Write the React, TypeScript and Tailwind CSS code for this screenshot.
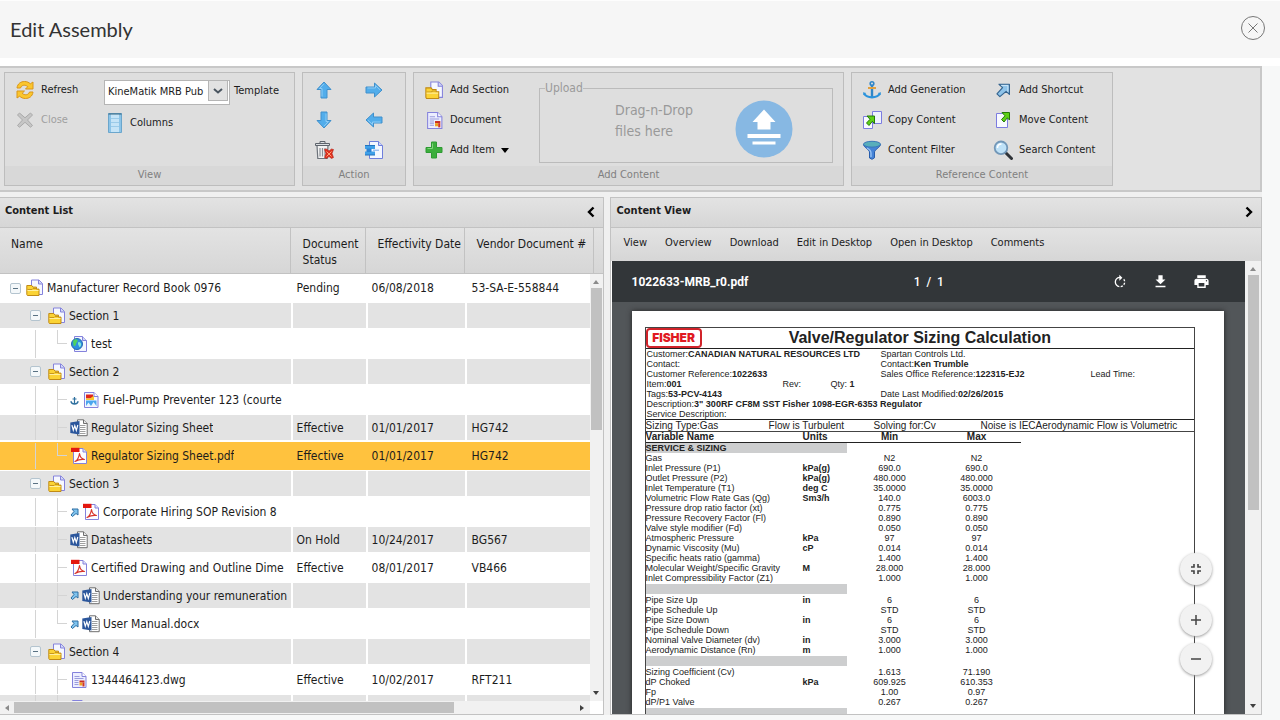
import { useState } from "react";
import type { ReactNode } from "react";

type Kind = "folder" | "web" | "image" | "word" | "pdf" | "doc";

interface Row {
  id: number;
  depth: number;
  kind: Kind;
  name: string;
  link?: "anchor" | "shortcut";
  last?: boolean;
  status?: string;
  date?: string;
  vendor?: string;
}

const rows: Row[] = [
  { id: 1, depth: 0, kind: "folder", name: "Manufacturer Record Book 0976", status: "Pending", date: "06/08/2018", vendor: "53-SA-E-558844" },
  { id: 2, depth: 1, kind: "folder", name: "Section 1" },
  { id: 3, depth: 2, kind: "web", name: "test", last: true },
  { id: 4, depth: 1, kind: "folder", name: "Section 2" },
  { id: 5, depth: 2, kind: "image", name: "Fuel-Pump Preventer 123 (courte", link: "anchor" },
  { id: 6, depth: 2, kind: "word", name: "Regulator Sizing Sheet", status: "Effective", date: "01/01/2017", vendor: "HG742" },
  { id: 7, depth: 2, kind: "pdf", name: "Regulator Sizing Sheet.pdf", last: true, status: "Effective", date: "01/01/2017", vendor: "HG742" },
  { id: 8, depth: 1, kind: "folder", name: "Section 3" },
  { id: 9, depth: 2, kind: "pdf", name: "Corporate Hiring SOP Revision 8", link: "shortcut" },
  { id: 10, depth: 2, kind: "word", name: "Datasheets", status: "On Hold", date: "10/24/2017", vendor: "BG567" },
  { id: 11, depth: 2, kind: "pdf", name: "Certified Drawing and Outline Dime", status: "Effective", date: "08/01/2017", vendor: "VB466" },
  { id: 12, depth: 2, kind: "word", name: "Understanding your remuneration", link: "shortcut" },
  { id: 13, depth: 2, kind: "word", name: "User Manual.docx", link: "shortcut", last: true },
  { id: 14, depth: 1, kind: "folder", name: "Section 4" },
  { id: 15, depth: 2, kind: "doc", name: "1344464123.dwg", status: "Effective", date: "10/02/2017", vendor: "RFT211" },
  { id: 16, depth: 2, kind: "doc", name: "" },
];

// [name, units, min, max], null is a grey band
const sizing: (string[] | null)[] = [
  ["Gas", "", "N2", "N2"],
  ["Inlet Pressure (P1)", "kPa(g)", "690.0", "690.0"],
  ["Outlet Pressure (P2)", "kPa(g)", "480.000", "480.000"],
  ["Inlet Temperature (T1)", "deg C", "35.0000", "35.0000"],
  ["Volumetric Flow Rate Gas (Qg)", "Sm3/h", "140.0", "6003.0"],
  ["Pressure drop ratio factor (xt)", "", "0.775", "0.775"],
  ["Pressure Recovery Factor (Fl)", "", "0.890", "0.890"],
  ["Valve style modifier (Fd)", "", "0.050", "0.050"],
  ["Atmospheric Pressure", "kPa", "97", "97"],
  ["Dynamic Viscosity (Mu)", "cP", "0.014", "0.014"],
  ["Specific heats ratio (gamma)", "", "1.400", "1.400"],
  ["Molecular Weight/Specific Gravity", "M", "28.000", "28.000"],
  ["Inlet Compressibility Factor (Z1)", "", "1.000", "1.000"],
  null,
  ["Pipe Size Up", "in", "6", "6"],
  ["Pipe Schedule Up", "", "STD", "STD"],
  ["Pipe Size Down", "in", "6", "6"],
  ["Pipe Schedule Down", "", "STD", "STD"],
  ["Nominal Valve Diameter (dv)", "in", "3.000", "3.000"],
  ["Aerodynamic Distance (Rn)", "m", "1.000", "1.000"],
  null,
  ["Sizing Coefficient (Cv)", "", "1.613", "71.190"],
  ["dP Choked", "kPa", "609.925", "610.353"],
  ["Fp", "", "1.00", "0.97"],
  ["dP/P1 Valve", "", "0.267", "0.267"],
  null,
];

/* ---------- icons ---------- */

function Svg({ size = 18, box = 18, children }: { size?: number; box?: number; children: ReactNode }) {
  return (
    <svg width={size} height={size} viewBox={`0 0 ${box} ${box}`} fill="none" className="shrink-0" aria-hidden="true">
      {children}
    </svg>
  );
}

function FolderIcon({ size }: { size?: number }) {
  return (
    <Svg size={size}>
      <path d="M5.500 1h7.500l3.500 3.500v11h-11z" fill="#f6f8ff" stroke="#8482dc" />
      <path d="M12.500 1v4h4" fill="#cfd6f6" stroke="#8482dc" />
      <path d="M.8 15.500V6.500h5l1.200 1.600h3.500v2h2.500v6.400H1.400z" fill="#fbd335" stroke="#c08a15" />
      <path d="M1.500 10.500h4.500l1-1h3" stroke="#c9971c" />
      <path d="M1.500 11.500h11" stroke="#fff0a0" />
    </Svg>
  );
}

function DocIcon({ size }: { size?: number }) {
  return (
    <Svg size={size}>
      <path d="M2.500 1.500h9.500l4 4v11H2.500z" fill="#eceeff" stroke="#8482dc" />
      <path d="M12 1.500v4h4" fill="#fff" stroke="#8482dc" />
      <path d="M4.500 5.500h5M4.500 7.500h9M4.500 9.500h4M4.500 11.500h4M4.500 13.500h4" stroke="#9a9cdd" />
      <path d="M9.500 9.500h5v2h-5z" fill="#c92c22" />
      <path d="M9.500 11.500h3v3h-3z" fill="#f0a020" />
      <path d="M12.500 11.500h2v4h-2z" fill="#cf3628" />
    </Svg>
  );
}

function WebIcon() {
  return (
    <Svg>
      <path d="M4.500 1.500h8l4 4v11h-12z" fill="#f4f7ff" stroke="#8482dc" />
      <path d="M12.500 1.500v4h4" fill="#cfd6f6" stroke="#8482dc" />
      <circle cx="7" cy="9" r="5.500" fill="#2f8fe0" stroke="#2368b0" />
      <path d="M3 6c1.500-2 3.500-2 4.500-1 .5 2-1 2-1.500 4s-1 2-1.500 2c-1.500 0-1-2-1.500-5z" fill="#4fd25e" />
      <path d="M8.500 7c2.500 0 3 2 2.500 3.500-1 2-2 2-2 .5-1-1.500-1.500-3-.5-4z" fill="#7fe8d8" />
    </Svg>
  );
}

function ImageIcon() {
  return (
    <Svg>
      <path d="M2.500 1.500h9.500l4 4v11H2.500z" fill="#f4f7ff" stroke="#8482dc" />
      <path d="M4 3.500h7v4H4z" fill="#e0261c" />
      <path d="M4 7.500h4l4-3v4.500H4z" fill="#f8c62a" />
      <path d="M4 9.500h10.500V15H4z" fill="#4aa6ee" />
      <path d="M4 15l2.500-3.500L9 15l2.500-4 3 4z" fill="#e9f5ff" />
      <path d="M12 1.500v4h4" fill="#fff" stroke="#8482dc" />
    </Svg>
  );
}

function WordIcon() {
  return (
    <Svg>
      <path d="M7.500.8h6l3.700 3.700v12.200H7.500z" fill="#fff" stroke="#6e6e6e" />
      <path d="M13.500.8v3.700h3.700" fill="#e6e6e6" stroke="#6e6e6e" />
      <path d="M10 6.500h5.500M10 8.500h5.500M10 10.500h5.500M10 12.500h5.500M10 14.500h5.500" stroke="#a0a0a0" />
      <path d="M.3 3.600L9.500 2v13.500L.3 14z" fill="#2b569c" />
      <path d="M1.900 6.200l1.400 5 1.500-4.600 1.500 4.800 1.500-5.400" stroke="#fff" strokeWidth="1.200" />
    </Svg>
  );
}

function PdfIcon() {
  return (
    <Svg>
      <path d="M3.500 1.500H13l3.500 3.500v11.500h-13z" fill="#fdfdff" stroke="#8482dc" />
      <path d="M13 1.500V5h3.500" fill="#dfe3fa" stroke="#8482dc" />
      <path d="M1 .8h8.500V5H1z" fill="#e3170f" />
      <path d="M5 14.500c2-1 4-4.500 4.500-8 .5 3.500 2.500 5.500 5 6-3-.5-6 0-9.500 2z" stroke="#d9352b" strokeWidth="1.200" strokeLinejoin="round" />
    </Svg>
  );
}

function AnchorIcon({ size = 20 }: { size?: number }) {
  return (
    <Svg size={size} box={20}>
      <circle cx="10" cy="3.500" r="1.800" stroke="#2f86c8" strokeWidth="1.600" />
      <path d="M10 5.500V17" stroke="#2f86c8" strokeWidth="2.400" />
      <path d="M6 8h8" stroke="#e0a040" strokeWidth="2" />
      <path d="M2 13.500c2 3 5 3.800 8 3.800s6-.8 8-3.800" stroke="#2b93dc" strokeWidth="2.200" />
      <path d="M1 12.200l3.200.8-2.600 2.200zM19 12.200l-3.200.8 2.600 2.200z" fill="#2b93dc" />
    </Svg>
  );
}

function SmallAnchorIcon() {
  return (
    <Svg size={9} box={9}>
      <path d="M4.500 1v7M2.500 3h4" stroke="#2d6f9e" strokeWidth="1.200" />
      <path d="M.8 5.200C1.500 7.500 3 8 4.500 8s3-.5 3.700-2.800" stroke="#2d6f9e" strokeWidth="1.300" />
    </Svg>
  );
}

function ShortcutIcon({ size = 18 }: { size?: number }) {
  return (
    <Svg size={size}>
      <path d="M4.500 2.500h11.700v11.500l-3.700-3.500-7 6-3.300-3.200 6.300-7z" fill="#8fc4ea" stroke="#35648f" strokeWidth="1.300" strokeLinejoin="round" />
      <path d="M7 4h7.500v7" stroke="#d3eafa" />
    </Svg>
  );
}

function SmallShortcutIcon() {
  return (
    <Svg size={9} box={9}>
      <path d="M2 1h6v6L6 5.500 2.500 8.500l-1.500-1.500L4 3.500z" fill="#7fc3ee" stroke="#2f6fa3" strokeLinejoin="round" />
    </Svg>
  );
}

function BlueArrow({ turn }: { turn: "up" | "down" | "left" | "right" }) {
  const deg = { up: 0, right: 90, down: 180, left: 270 }[turn];
  return (
    <Svg>
      <g transform={`rotate(${deg} 9 9)`}>
        <path d="M9 1l7 7.500h-4V17H6V8.500H2z" fill="#52adeb" stroke="#4090cc" strokeLinejoin="round" />
        <path d="M9 2.800L4.500 7.500H7V15.500" stroke="#8fcdf5" />
      </g>
    </Svg>
  );
}

function RefreshIcon() {
  return (
    <Svg size={20} box={20}>
      <path d="M2 8C2.500 3.500 6 1.500 9.500 1.500c2.500 0 4.300.8 5.800 2.300L18 2v7h-7.500l2.300-2.300C10.500 4.500 6.500 4.700 5.500 8z" fill="#fbc62c" stroke="#d9961a" strokeLinejoin="round" />
      <path d="M18 12c-.5 4.500-4 6.500-7.500 6.500-2.500 0-4.300-.8-5.800-2.300L2 18v-7h7.500l-2.300 2.300c2.300 2.200 6.300 2 7.300-1.300z" fill="#fbc62c" stroke="#d9961a" strokeLinejoin="round" />
    </Svg>
  );
}

function CloseIcon() {
  return (
    <Svg>
      <path d="M3.500 2L9 6.800 14.500 2 16.500 4 11.500 9l5 5.500-2 1.700L9 11.300 3.500 16.200l-2-1.700 5-5.500-5-5z" fill="#c6c6c6" stroke="#aaa" strokeLinejoin="round" />
    </Svg>
  );
}

function ColumnsIcon() {
  return (
    <svg width="14" height="20" viewBox="0 0 14 20" fill="none" className="shrink-0" aria-hidden="true">
      <path d="M.5.5h13v19H.500z" fill="#8cc4e8" stroke="#6ba6cc" />
      <path d="M3 1h8v18H3z" fill="#c5e4f7" />
      <path d="M3 5.500h8M3 9.500h8M3 13.500h8" stroke="#9bcbe9" />
      <path d="M.5 1h13" stroke="#36647f" />
    </svg>
  );
}

function TrashIcon() {
  return (
    <Svg size={20} box={20}>
      <path d="M3 5.500l.8 13h9.400l.8-13z" fill="#f2f2f2" stroke="#6d737b" strokeWidth="1.200" />
      <path d="M6 8v8.500M8.500 8v8.500M11 8v8.500" stroke="#8b9097" strokeWidth="1.200" />
      <path d="M1.500 3.500h14v2h-14zM6 1.500h5v2H6z" fill="#dcdfe2" stroke="#5d636b" />
      <path d="M10.500 9.500l2-.5 2.500 2 2.500-2 2 .5-1.500 4 1.500 4-2 1-2.500-2-2.500 2-2-1 1.500-4z" fill="#e0301e" stroke="#b3241a" strokeWidth=".6" />
      <path d="M12.500 11.500l5 5M17.500 11.500l-5 5" stroke="#ffa078" />
    </Svg>
  );
}

function MoveDocIcon() {
  return (
    <Svg size={20} box={20}>
      <path d="M5.500 1.500h9l4 4v13h-13z" fill="#f4f7ff" stroke="#6f7fdc" />
      <path d="M14.500 1.500v4h4" fill="#cfd6f6" stroke="#6f7fdc" />
      <path d="M1 5.500h10v3.500H1zM1 11.500h10V15H1z" fill="#3fa0e8" />
      <path d="M2.500 8.500h5v3.500h-5z" fill="#2b83d4" />
      <path d="M1 5.500h10M1 15h10" stroke="#2473bd" />
      <path d="M9 10.200h6" stroke="#77a8e8" />
    </Svg>
  );
}

function PlusIcon() {
  return (
    <Svg size={18}>
      <path d="M6.500 1h5v5.500H17v5h-5.500V17h-5v-5.500H1v-5h5.500z" fill="#3cae3c" stroke="#2e9a33" strokeLinejoin="round" />
      <path d="M7.500 2.500v5h-5" stroke="#7fd67a" />
    </Svg>
  );
}

function GreenArrow({ x, y }: { x: number; y: number }) {
  return (
    <path
      d={`M${x + 1} ${y}h7.500v7.500l-2.200-2.200-3.300 4.200-2.500-2.500 3.500-3.700z`}
      fill="#5ed016"
      stroke="#257a08"
      strokeLinejoin="round"
    />
  );
}

function CopyIcon() {
  return (
    <Svg size={20} box={20}>
      <path d="M10.500 1.500h9v12h-9z" fill="#eef3fd" stroke="#7c7ce0" />
      <path d="M1.500 6.500h9v12h-9z" fill="#f8faff" stroke="#7c7ce0" />
      <GreenArrow x={4} y={6} />
    </Svg>
  );
}

function MoveIcon() {
  return (
    <Svg>
      <path d="M2.500 2.500h11v14h-11z" fill="#f8faff" stroke="#7c7ce0" />
      <GreenArrow x={7} y={1.5} />
    </Svg>
  );
}

function FilterIcon() {
  return (
    <Svg size={20} box={20}>
      <path d="M1.500 4.500C1.500 7 7.500 10 7.500 12v6l2.500 1.300 2.500-1.500V12c0-2 6-5 6-7.500z" fill="#4583d6" stroke="#275cab" />
      <ellipse cx="10" cy="4.200" rx="8.500" ry="2.900" fill="#58aebb" stroke="#3a78b8" />
      <path d="M5 8c3 1.500 4 2.500 4 5v4" stroke="#9cc6f5" strokeWidth="1.300" />
    </Svg>
  );
}

function SearchIcon() {
  return (
    <Svg size={20} box={20}>
      <path d="M12.500 12.500l6 6" stroke="#2f3338" strokeWidth="3" strokeLinecap="round" />
      <circle cx="8" cy="7.800" r="6.300" fill="#bfe2f8" stroke="#7297b8" strokeWidth="1.800" />
      <path d="M4.500 8c0-2.500 1.500-4 4-4" stroke="#fff" strokeWidth="1.500" />
    </Svg>
  );
}

const kindIcons: Record<Kind, ReactNode> = {
  folder: <FolderIcon />,
  web: <WebIcon />,
  image: <ImageIcon />,
  word: <WordIcon />,
  pdf: <PdfIcon />,
  doc: <DocIcon />,
};

/* ---------- ribbon ---------- */

function Group({ title, className, children }: { title: string; className: string; children: ReactNode }) {
  return (
    <section className={`flex shrink-0 flex-col border border-[#bdbdbd] bg-[#dedede] ${className}`}>
      <div className="flex h-[93px] pt-0.5">{children}</div>
      <h2 className="h-[19px] bg-[#d8d8d8] text-center text-[11px] leading-[18px] text-[#808080]">{title}</h2>
    </section>
  );
}

function Tool({ icon, label, disabled, arrow }: { icon: ReactNode; label: string; disabled?: boolean; arrow?: boolean }) {
  return (
    <button disabled={disabled} className="flex h-[30px] items-center gap-1.5 text-[11px] whitespace-nowrap disabled:text-[#a0a0a0]">
      <span className="flex w-5 justify-center">{icon}</span>
      {label}
      {arrow && <span className="border-x-4 border-t-[5px] border-x-transparent border-t-black" />}
    </button>
  );
}

function Ribbon() {
  return (
    <div className="flex gap-[7px] border-2 border-l-0 border-[#c8c8c8] bg-[#e2e2e2] py-1 pl-1">
      <Group title="View" className="w-[291px]">
        <div className="flex w-[99px] flex-col items-start pl-2.5">
          <Tool icon={<RefreshIcon />} label="Refresh" />
          <Tool icon={<CloseIcon />} label="Close" disabled />
        </div>
        <div className="flex flex-col items-start gap-1.5 pt-[3px]">
          <div className="flex items-center gap-1">
            <div className="relative">
              <select id="template" className="h-[25px] w-[126px] appearance-none border border-[#b5b5b5] bg-white pr-5 pl-[3px] text-[11px]">
                <option>KineMatik MRB Pub</option>
              </select>
              <span className="pointer-events-none absolute top-0.5 right-0.5 flex h-[21px] w-5 items-center justify-center border border-[#b5b5b5] bg-[#e2e2e2]">
                <svg width="10" height="6" viewBox="0 0 10 6" fill="none"><path d="M1 1l4 3.500L9 1" stroke="#4a5560" strokeWidth="2" /></svg>
              </span>
            </div>
            <label htmlFor="template" className="text-[11px]">Template</label>
          </div>
          <button className="flex h-6 items-center gap-2 pl-1 text-[11px]"><ColumnsIcon />Columns</button>
        </div>
      </Group>

      <Group title="Action" className="w-[104px]">
        <div className="grid flex-1 grid-cols-2 grid-rows-[30px_30px_30px] pr-1">
          <button aria-label="Move up" className="flex items-center justify-center pr-2"><BlueArrow turn="up" /></button>
          <button aria-label="Move right" className="flex items-center justify-center pr-1.5"><BlueArrow turn="right" /></button>
          <button aria-label="Move down" className="flex items-center justify-center pr-2"><BlueArrow turn="down" /></button>
          <button aria-label="Move left" className="flex items-center justify-center pr-1.5"><BlueArrow turn="left" /></button>
          <button aria-label="Delete" className="flex items-center justify-center pr-2"><TrashIcon /></button>
          <button aria-label="Insert" className="flex items-center justify-center pr-1.5"><MoveDocIcon /></button>
        </div>
      </Group>

      <Group title="Add Content" className="w-[431px]">
        <div className="flex w-[125px] flex-col items-start pl-2.5">
          <Tool icon={<FolderIcon size={19} />} label="Add Section" />
          <Tool icon={<DocIcon size={19} />} label="Document" />
          <Tool icon={<PlusIcon />} label="Add Item" arrow />
        </div>
        <fieldset className="mt-[5px] h-[83px] w-[294px] border border-[#bbb] pl-[5px]">
          <legend className="text-xs leading-4 text-[#9a9a9a]">Upload</legend>
          <div className="flex items-start pt-1 pl-[70px] text-sm leading-[21px] text-[#999]">
            <p className="w-[120px]">Drag-n-Drop<br />files here</p>
            <button aria-label="Upload files">
              <svg width="58" height="58" viewBox="0 0 58 58" fill="none" aria-hidden="true">
                <circle cx="29" cy="29" r="28.500" fill="#87b8e3" />
                <path d="M29 9.500L40.500 22h-5v7.500h-13V22h-5z" fill="#fff" />
                <path d="M12.500 34h33v4h-33zM17.500 41.500h23v3h-23z" fill="#fff" />
              </svg>
            </button>
          </div>
        </fieldset>
      </Group>

      <Group title="Reference Content" className="w-[262px]">
        <div className="flex w-[131px] flex-col items-start pl-2.5">
          <Tool icon={<AnchorIcon />} label="Add Generation" />
          <Tool icon={<CopyIcon />} label="Copy Content" />
          <Tool icon={<FilterIcon />} label="Content Filter" />
        </div>
        <div className="flex flex-col items-start pl-2.5">
          <Tool icon={<ShortcutIcon size={16} />} label="Add Shortcut" />
          <Tool icon={<MoveIcon />} label="Move Content" />
          <Tool icon={<SearchIcon />} label="Search Content" />
        </div>
      </Group>
    </div>
  );
}

/* ---------- content list ---------- */

function TreeCell({ row }: { row: Row }) {
  const toggle = (
    <button aria-label="Collapse" className="relative flex size-[11px] items-center justify-center rounded-xs border border-[#b4c4cf] bg-[#f4f8fa]">
      <span className="h-px w-[5px] bg-[#5a7284]" />
    </button>
  );
  return (
    <div className="flex h-full items-center overflow-hidden whitespace-nowrap">
      {row.depth === 0 && <span className="flex w-[26px] shrink-0 justify-center pl-1">{toggle}</span>}
      {row.depth === 1 && (
        <>
          <span className="w-6 shrink-0" />
          <span className="flex w-6 shrink-0 pl-1.5">{toggle}</span>
        </>
      )}
      {row.depth === 2 && (
        <>
          <span className="h-full w-9 shrink-0 border-r border-[#d4d4d4]" />
          <span className="h-full w-[21px] shrink-0" />
          <span className="flex h-full w-[13px] shrink-0 flex-col">
            <span className="h-1/2 w-2.5 border-b border-l border-[#d4d4d4]" />
            {!row.last && <span className="h-1/2 w-2.5 border-l border-[#d4d4d4]" />}
          </span>
        </>
      )}
      {row.link === "anchor" && <span className="w-3 shrink-0"><SmallAnchorIcon /></span>}
      {row.link === "shortcut" && <span className="w-3 shrink-0"><SmallShortcutIcon /></span>}
      {kindIcons[row.kind]}
      <span className="ml-[3px] overflow-hidden">{row.name}</span>
    </div>
  );
}

function ContentList() {
  const [selected, setSelected] = useState(7);

  return (
    <section className="flex min-w-0 flex-[604] flex-col border border-l-0 border-[#c2c2c2] bg-white">
      <header className="flex h-[30px] shrink-0 items-center justify-between border-b border-[#c2c2c2] bg-linear-to-b from-[#e3e3e3] to-[#d6d6d6] pr-2 pb-0.5 pl-[5px]">
        <h2 className="text-[11px] font-bold">Content List</h2>
        <button aria-label="Collapse list"><svg width="8" height="12" viewBox="0 0 8 12" fill="none"><path d="M6.500 1.500L2 6l4.500 4.500" stroke="#000" strokeWidth="2.400" /></svg></button>
      </header>

      <div className="relative min-h-0 flex-1 overflow-hidden">
        <table className="w-full table-fixed border-separate border-spacing-0 text-xs leading-4">
          <colgroup>
            <col />
            <col className="w-[75px]" />
            <col className="w-[99px]" />
            <col className="w-[129px]" />
            <col className="w-[9px]" />
          </colgroup>
          <thead>
            <tr className="h-[46px] bg-linear-to-b from-[#e3e3e3] to-[#d6d6d6] text-left align-top">
              <th className="border-r border-b border-[#c2c2c2] pt-2 pl-[11px] font-normal">Name</th>
              <th className="border-r border-b border-[#c2c2c2] pt-2 pl-3 font-normal">Document Status</th>
              <th className="border-r border-b border-[#c2c2c2] pt-2 pl-3 font-normal whitespace-nowrap">Effectivity Date</th>
              <th className="border-r border-b border-[#c2c2c2] pt-2 pl-3 font-normal whitespace-nowrap">Vendor Document #</th>
              <td className="border-b border-[#c2c2c2]" />
            </tr>
          </thead>
          <tbody>
            {rows.map((row, i) => {
              const active = row.id === selected;
              const tone = active ? "border-y border-[#ffc23e] bg-[#ffc23e]" : i % 2 ? "border-t border-b-2 border-white bg-[#e3e3e3]" : "bg-white";
              const gap = active ? "" : "border-l-2";
              return (
                <tr key={row.id} className="h-7" onClick={() => setSelected(row.id)}>
                  <td className={`h-7 p-0 ${tone}`}><TreeCell row={row} /></td>
                  <td className={`p-0 ${tone} ${gap} ${active ? "pl-1.5" : "border-l-white pl-1"}`}>{row.status}</td>
                  <td className={`p-0 ${tone} ${gap} ${active ? "pl-1.5" : "border-l-white pl-1"}`}>{row.date}</td>
                  <td className={`p-0 ${tone} ${gap} ${active ? "pl-[7px]" : "border-l-white pl-[5px]"}`}>{row.vendor}</td>
                  <td className={`p-0 ${tone}`} />
                </tr>
              );
            })}
          </tbody>
        </table>

        <div className="absolute top-[46px] right-0 bottom-0 flex w-[13px] flex-col items-center justify-between bg-[#f1f1f1] pt-1.5 pb-1.5">
          <span className="border-x-[3px] border-b-4 border-x-transparent border-b-[#8a8a8a]" />
          <span className="mt-1 mb-auto h-[142px] w-[11px] bg-[#c1c1c1]" />
          <span className="border-x-[3px] border-t-4 border-x-transparent border-t-[#404040]" />
        </div>
      </div>

      <div className="flex h-[13px] shrink-0 items-center bg-[#f1f1f1]">
        <span className="mx-[5px] border-y-[3px] border-r-4 border-y-transparent border-r-[#8a8a8a]" />
        <span className="mr-auto h-[11px] w-[73%] bg-[#c1c1c1]" />
        <span className="mr-1.5 border-y-[3px] border-l-4 border-y-transparent border-l-[#404040]" />
        <span className="h-full w-[13px] bg-white" />
      </div>
    </section>
  );
}

/* ---------- content view ---------- */

function PdfPage() {
  return (
    <article className="mr-[21px] ml-5 flex min-h-0 flex-1 flex-col bg-white pt-4 pr-[29px] pl-[13px] font-['Liberation_Sans',sans-serif] text-[#222] shadow-[0_0_5px_#222]">
      <div className="flex flex-1 flex-col border border-b-0 border-[#444] text-[9px] leading-[10px] whitespace-nowrap">
        <div className="relative flex h-[21px] items-center justify-center border-b border-[#222]">
          <span className="absolute top-0 left-0 flex h-5 w-14 items-center justify-center rounded border-2 border-[#d1232a] font-['Inter',sans-serif] text-xs font-black text-[#e01a22]">FISHER</span>
          <h3 className="text-base font-bold">Valve/Regulator Sizing Calculation</h3>
        </div>
        <div className="grid grid-cols-[136px_48px_50px_210px_1fr] grid-rows-[repeat(7,10px)] border-b border-[#222] pl-px">
          <p className="col-span-3">Customer:<b>CANADIAN NATURAL RESOURCES LTD</b></p>
          <p className="col-span-2">Spartan Controls Ltd.</p>
          <p className="col-span-3">Contact:</p>
          <p className="col-span-2">Contact:<b>Ken Trumble</b></p>
          <p className="col-span-3">Customer Reference:<b>1022633</b></p>
          <p>Sales Office Reference:<b>122315-EJ2</b></p>
          <p>Lead Time:</p>
          <p>Item:<b>001</b></p>
          <p>Rev:</p>
          <p className="col-span-3">Qty: <b>1</b></p>
          <p className="col-span-3">Tags:<b>53-PCV-4143</b></p>
          <p className="col-span-2">Date Last Modified:<b>02/26/2015</b></p>
          <p className="col-span-5">Description:<b>3" 300RF CF8M SST Fisher 1098-EGR-6353 Regulator</b></p>
          <p className="col-span-5">Service Description:</p>
        </div>
        <div className="grid grid-cols-[123px_105px_107px_1fr] border-b border-[#444] text-[10px] leading-[11px]">
          <span>Sizing Type:Gas</span>
          <span>Flow is Turbulent</span>
          <span>Solving for:Cv</span>
          <span>Noise is IECAerodynamic Flow is Volumetric</span>
        </div>
        <table className="w-[375px] table-fixed border-separate border-spacing-0">
          <colgroup>
            <col className="w-[157px]" />
            <col className="w-[44px]" />
            <col className="w-[86px]" />
            <col className="w-[88px]" />
          </colgroup>
          <thead>
            <tr className="text-left text-[10px]">
              <th className="border-b border-[#222] p-0">Variable Name</th>
              <th className="border-b border-[#222] p-0">Units</th>
              <th className="border-b border-[#222] p-0 text-center">Min</th>
              <th className="border-b border-[#222] p-0 text-center">Max</th>
            </tr>
          </thead>
          <tbody>
            <tr><th colSpan={2} className="bg-[#cdcecf] p-0 text-left">SERVICE &amp; SIZING</th></tr>
            {sizing.map((r, i) =>
              r ? (
                <tr key={i}>
                  <td className="p-0">{r[0]}</td>
                  <td className="p-0 font-bold">{r[1]}</td>
                  <td className="p-0 text-center">{r[2]}</td>
                  <td className="p-0 text-center">{r[3]}</td>
                </tr>
              ) : (
                <tr key={i} className="h-3"><td colSpan={2} className="border-y border-white bg-[#cdcecf] p-0" /></tr>
              )
            )}
          </tbody>
        </table>
      </div>
    </article>
  );
}

const fab = "flex size-8 items-center justify-center rounded-full bg-[#f2f2f2] shadow-[0_1px_3px_#999]";

function ContentView() {
  return (
    <section className="flex min-w-0 flex-[652] flex-col border border-[#c2c2c2] bg-white">
      <header className="flex h-[30px] shrink-0 items-center justify-between border-b border-[#c2c2c2] bg-linear-to-b from-[#e3e3e3] to-[#d6d6d6] pr-2 pb-0.5 pl-1.5">
        <h2 className="text-[11px] font-bold">Content View</h2>
        <button aria-label="Collapse view"><svg width="8" height="12" viewBox="0 0 8 12" fill="none"><path d="M1.500 1.500L6 6l-4.500 4.500" stroke="#000" strokeWidth="2.400" /></svg></button>
      </header>
      <nav className="flex h-[33px] shrink-0 items-center gap-[18px] bg-linear-to-b from-[#e3e3e3] to-[#d6d6d6] pb-0.5 pl-[13px] text-[11px] whitespace-nowrap">
        {["View", "Overview", "Download", "Edit in Desktop", "Open in Desktop", "Comments"].map((item) => (
          <button key={item}>{item}</button>
        ))}
      </nav>

      <div className="flex min-h-0 flex-1 pl-px">
        <div className="relative flex min-w-0 flex-1 flex-col overflow-hidden bg-[#525659]">
          <div className="grid h-[41px] shrink-0 grid-cols-3 items-center bg-[#323639] pr-[35px] pl-5 font-['Roboto',sans-serif] text-xs text-white">
            <span className="font-bold">1022633-MRB_r0.pdf</span>
            <span className="pl-4 text-center font-medium">1&nbsp; / &nbsp;1</span>
            <div className="flex justify-end gap-6">
              <button aria-label="Rotate">
                <svg width="16" height="16" viewBox="0 0 24 24" fill="#fff"><path d="M15.550 5.550L11 1v3.070C7.060 4.560 4 7.920 4 12s3.050 7.440 7 7.930v-2.020c-2.840-.48-5-2.940-5-5.910s2.160-5.430 5-5.910V10l4.550-4.450zM19.930 11c-.17-1.390-.72-2.730-1.620-3.890l-1.420 1.420c.54.75.88 1.600 1.020 2.470h2.020zM13 17.900v2.020c1.390-.17 2.740-.71 3.900-1.610l-1.440-1.440c-.75.54-1.590.89-2.460 1.030zm3.890-2.420l1.420 1.410c.9-1.160 1.450-2.500 1.620-3.890h-2.020c-.14.870-.48 1.720-1.020 2.480z" /></svg>
              </button>
              <button aria-label="Download file">
                <svg width="17" height="17" viewBox="0 0 24 24" fill="#fff"><path d="M19 9h-4V3H9v6H5l7 7 7-7zM5 18v2h14v-2H5z" /></svg>
              </button>
              <button aria-label="Print">
                <svg width="17" height="17" viewBox="0 0 24 24" fill="#fff"><path d="M19 8H5c-1.660 0-3 1.340-3 3v6h4v4h12v-4h4v-6c0-1.660-1.340-3-3-3zm-3 11H8v-5h8v5zm3-7c-.55 0-1-.45-1-1s.45-1 1-1 1 .45 1 1-.45 1-1 1zm-1-9H6v4h12V3z" /></svg>
              </button>
            </div>
          </div>
          <div className="flex min-h-0 flex-1 flex-col pt-[9px]"><PdfPage /></div>
          <div className="absolute right-[33px] bottom-[39px] flex flex-col">
            <button aria-label="Fit to page" className={`${fab} mb-[19px]`}>
              <svg width="12" height="12" viewBox="0 0 12 12" fill="none" stroke="#444" strokeWidth="1.600"><path d="M1 4h3V1M8 1v3h3M11 8H8v3M4 11V8H1" /></svg>
            </button>
            <button aria-label="Zoom in" className={`${fab} mb-[7px]`}>
              <svg width="12" height="12" viewBox="0 0 12 12" stroke="#444" strokeWidth="1.500"><path d="M6 1v10M1 6h10" /></svg>
            </button>
            <button aria-label="Zoom out" className={fab}>
              <svg width="12" height="12" viewBox="0 0 12 12" stroke="#444" strokeWidth="1.500"><path d="M1 6h10" /></svg>
            </button>
          </div>
        </div>
        <div className="flex w-4 shrink-0 flex-col items-center bg-[#f1f1f1] py-1.5">
          <span className="border-x-[3px] border-b-4 border-x-transparent border-b-[#8a8a8a]" />
          <span className="mt-1 mb-auto h-[235px] w-[11px] bg-[#c1c1c1]" />
          <span className="border-x-[3px] border-t-4 border-x-transparent border-t-[#404040]" />
        </div>
      </div>
    </section>
  );
}

export default function App() {
  return (
    <div className="flex h-screen flex-col overflow-hidden bg-[#f7f8f8] font-['DejaVu_Sans_Condensed','Noto_Sans',sans-serif] text-[#1c1c1c]">
      <header className="flex h-[66px] shrink-0 items-start border-t border-[#fdfdfd] bg-white">
        <div className="flex h-[57px] w-full items-center justify-between bg-[#f6f6f6] pr-3.5 pb-1 pl-2.5">
          <h1 className="pt-[3px] font-['Lato',sans-serif] text-xl text-[#333]">Edit Assembly</h1>
          <button aria-label="Close dialog">
            <svg width="26" height="26" viewBox="0 0 26 26" fill="none" stroke="#777"><circle cx="13" cy="13" r="11.500" /><path d="M8.500 8.500l9 9M17.500 8.500l-9 9" /></svg>
          </button>
        </div>
      </header>
      <main className="mr-[18px] mb-[5px] flex min-h-0 flex-1 flex-col gap-[5px] bg-[#f0f0f0]">
        <Ribbon />
        <div className="flex min-h-0 flex-1 gap-1.5">
          <ContentList />
          <ContentView />
        </div>
      </main>
    </div>
  );
}
